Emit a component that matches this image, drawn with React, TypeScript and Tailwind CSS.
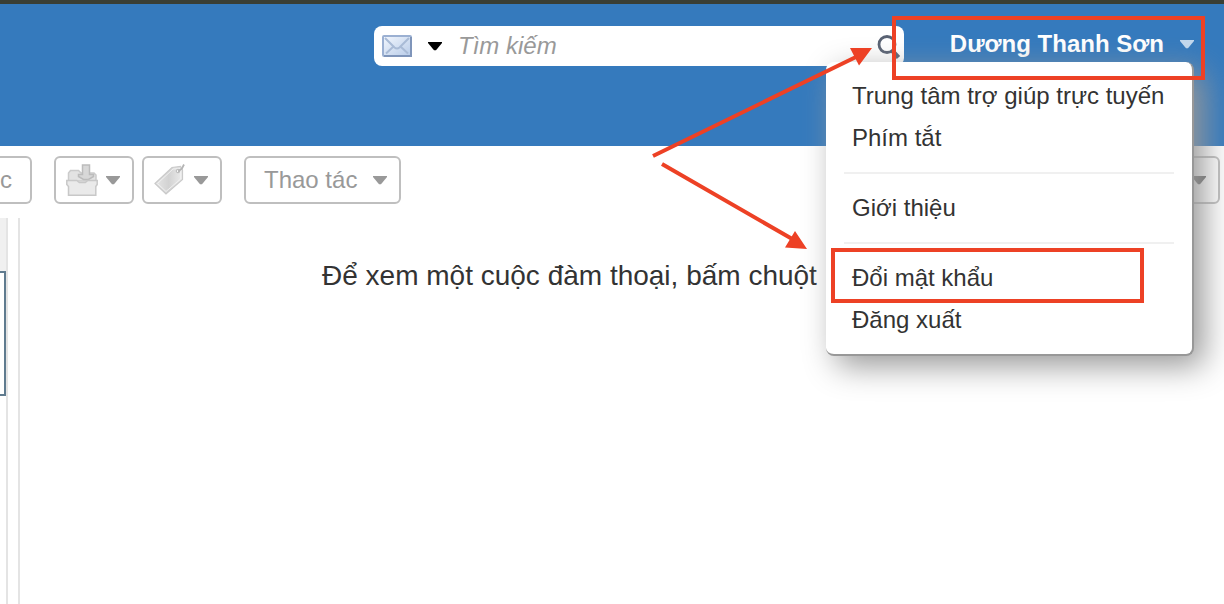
import React, { useState } from 'react';
import { clsx } from 'clsx';

interface MenuEntry {
  label: string;
  href: string;
}

const MENU_GROUPS: MenuEntry[][] = [
  [
    { label: 'Trung tâm trợ giúp trực tuyến', href: '#help' },
    { label: 'Phím tắt', href: '#shortcuts' },
  ],
  [{ label: 'Giới thiệu', href: '#about' }],
  [
    { label: 'Đổi mật khẩu', href: '#password' },
    { label: 'Đăng xuất', href: '#logout' },
  ],
];

function Caret({ className }: { className?: string }) {
  return (
    <svg viewBox="0 0 14 9" className={clsx('h-[9px] w-3.5 shrink-0', className)} fill="currentColor" aria-hidden="true">
      <path d="M0 0h14v1L8 8.2H6L0 1z" />
    </svg>
  );
}

function MailIcon() {
  return (
    <svg viewBox="0 0 30 22" className="h-[22px] w-[30px]" aria-hidden="true">
      <defs>
        <linearGradient id="mail" x1="0" y1="0" x2="1" y2="1">
          <stop offset="0" stopColor="#f3f7fd" />
          <stop offset="1" stopColor="#b7cbe8" />
        </linearGradient>
      </defs>
      <rect x="1" y="1" width="28" height="20" rx="1" fill="url(#mail)" stroke="#9bb0d2" strokeWidth="2" />
      <path d="M29 2v19H2" fill="none" stroke="#7f95ba" strokeWidth="2" />
      <path d="M3 3l9.500 9.500q2.500 2 5 0L27 3M4 18.500l7.500-7M26 18.500l-7.500-7" fill="none" stroke="#a9bbd6" strokeWidth="2" />
    </svg>
  );
}

function SearchIcon() {
  return (
    <svg viewBox="0 0 28 28" className="h-7 w-7" fill="none" stroke="#596273" aria-hidden="true">
      <circle cx="11" cy="10.500" r="8" strokeWidth="2.800" />
      <path d="M16.500 17l6 6.500" strokeWidth="4.500" />
    </svg>
  );
}

function FolderIcon() {
  return (
    <svg viewBox="0 0 32 32" className="h-8 w-8" strokeWidth="1.500" aria-hidden="true">
      <path d="M2.500 17V9l2-2.500h8L15 9h13l2 2v6z" fill="#e3e3e3" stroke="#cbcbcb" />
      <path d="M16.500 1h7v9.500h4v2l-5 3h-5l-5-3v-2h4z" fill="#d8d8d8" stroke="#bcbcbc" />
      <path d="M.8 16.500h10l2.500 2h6l2.500-2h9.400v4l-1.400 2v8.700H2.500v-8.700L.8 20.500z" fill="#eaeaea" stroke="#c8c8c8" />
    </svg>
  );
}

function TagIcon() {
  return (
    <svg viewBox="0 0 32 32" className="h-8 w-8" aria-hidden="true">
      <defs>
        <linearGradient id="tag" x1="0" y1="0" x2="1" y2="0">
          <stop offset="0" stopColor="#e6e6e6" />
          <stop offset=".5" stopColor="#d2d2d2" />
          <stop offset="1" stopColor="#ececec" />
        </linearGradient>
      </defs>
      <path d="M1 19.500L18 3.500l8.500-1L28.500 6v9.500L12 30z" fill="url(#tag)" stroke="#cacaca" strokeWidth="1.200" />
      <path d="M3.500 19.500L19 5l6.500-.5 1 2V15L12 27.500z" fill="none" stroke="#f0f0f0" />
      <circle cx="24" cy="7" r="1.800" fill="#fff" stroke="#b8b8b8" />
      <path d="M24 7.500l4-3 2-4" fill="none" stroke="#b4b4b4" strokeWidth="1.800" />
    </svg>
  );
}

function ToolbarButton({ className, children, ...rest }: React.ButtonHTMLAttributes<HTMLButtonElement>) {
  return (
    <button
      type="button"
      className={clsx(
        'flex h-12 items-center rounded-md border-2 border-[#bfbfbf] bg-white text-2xl text-[#999]',
        className
      )}
      {...rest}
    >
      {children}
    </button>
  );
}

function AccountMenu() {
  return (
    <nav className="absolute right-0 top-full z-10 w-[368px] rounded-lg border-b-2 border-r-2 border-[#989898] bg-white px-[18px] py-[13px] shadow-[10px_10px_32px_#989898]">
      {MENU_GROUPS.map((group, i) => (
        <ul key={i} className={clsx(i > 0 && 'mt-[13px] border-t-2 border-[#f0f0f0] pt-[13px]')}>
          {group.map(entry => (
            <li key={entry.href}>
              <a href={entry.href} className="block h-[42px] whitespace-nowrap pl-2 text-2xl leading-[42px] text-[#333]">
                {entry.label}
              </a>
            </li>
          ))}
        </ul>
      ))}
    </nav>
  );
}

// Red boxes and arrows that point the reader at the account menu
function Callouts() {
  return (
    <svg
      viewBox="0 0 580 310"
      className="pointer-events-none absolute right-0 top-0 z-20 h-[310px] w-[580px]"
      fill="none"
      stroke="#ed4125"
      strokeWidth="4"
      aria-hidden="true"
    >
      <rect x="250" y="18" width="309" height="60" />
      <rect x="189" y="250" width="309" height="51" />
      <path d="M9 156L214 56M18 164L150 240" />
      <path d="M228 48L206 48L215 65.500zM163 249L151 231L141 247.500z" fill="#ed4125" stroke="none" />
    </svg>
  );
}

export default function App() {
  const [query, setQuery] = useState('');
  const [open, setOpen] = useState(true);

  return (
    <div className="relative flex min-h-screen flex-col overflow-hidden bg-white font-['Liberation_Sans',Arial,sans-serif] text-[#333]">
      <header className="flex h-[146px] items-start justify-end border-t-4 border-[#3a3f35] bg-[#357abd] pr-[30px] pt-[22px]">
        <form className="flex h-10 w-[530px] items-center rounded-lg bg-white pl-2" onSubmit={e => e.preventDefault()}>
          <button type="button" aria-label="Mail" className="flex items-center gap-4">
            <MailIcon />
            <Caret className="text-black" />
          </button>
          <input
            type="text"
            aria-label="Tìm kiếm"
            placeholder="Tìm kiếm"
            value={query}
            onChange={e => setQuery(e.target.value)}
            className="ml-4 h-10 min-w-0 flex-1 text-2xl italic outline-none placeholder:text-[#999]"
          />
          <button type="submit" aria-label="Search" className="pt-1">
            <SearchIcon />
          </button>
        </form>
        <div className="relative w-[290px]">
          <button
            type="button"
            onClick={() => setOpen(!open)}
            className="flex h-9 w-full items-center justify-end gap-4 whitespace-nowrap text-2xl font-bold text-white"
          >
            Dương Thanh Sơn
            <Caret className="text-[#c3d9ee]" />
          </button>
          {open && <AccountMenu />}
        </div>
      </header>

      <div className="flex items-center pr-1 pt-2.5">
        <ToolbarButton className="w-8 rounded-l-none border-l-0">c</ToolbarButton>
        <ToolbarButton className="ml-[22px] w-20 gap-2 pl-2.5" aria-label="Move">
          <FolderIcon />
          <Caret />
        </ToolbarButton>
        <ToolbarButton className="ml-2 w-20 gap-2 pl-2.5" aria-label="Tag">
          <TagIcon />
          <Caret />
        </ToolbarButton>
        <ToolbarButton className="ml-[22px] gap-4 pl-[18px] pr-3">
          Thao tác
          <Caret />
        </ToolbarButton>
        <ToolbarButton className="ml-auto w-24 justify-end pr-3" aria-label="View">
          <Caret className="text-[#666]" />
        </ToolbarButton>
      </div>

      <main className="mt-3.5 flex flex-1">
        <aside className="w-2 border-r-2 border-[#e4e4e4]">
          <div className="h-[53px] bg-[#f0f0f0]" />
          <div className="h-[125px] border-2 border-l-0 border-[#607b8f]" />
        </aside>
        <section className="ml-2.5 flex-1 border-l-2 border-[#e4e4e4] pl-[302px] pt-10">
          <p className="whitespace-nowrap text-[28px] leading-9">Để xem một cuộc đàm thoại, bấm chuột</p>
        </section>
      </main>

      <Callouts />
    </div>
  );
}
